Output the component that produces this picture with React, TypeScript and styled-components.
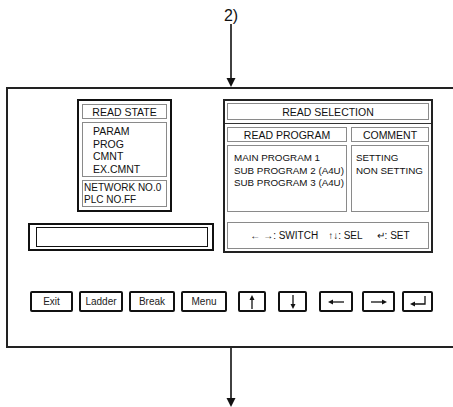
import React from "react";
import styled, { createGlobalStyle } from "styled-components";

const GlobalStyle = createGlobalStyle`
  html, body {
    margin: 0;
    padding: 0;
    background: #fff;
  }
  body {
    width: 453px;
    height: 407px;
    overflow: hidden;
    font-family: "Liberation Sans", Arial, sans-serif;
    color: #111;
  }
`;

const Page = styled.div`
  width: 453px;
  height: 407px;
  overflow: hidden;
  display: flex;
  flex-direction: column;
`;

const Connector = styled.div<{ $h: number }>`
  width: 462px;
  height: ${(p) => p.$h}px;
  flex-shrink: 0;
  display: flex;
  flex-direction: column;
  align-items: center;
`;

const StepLabel = styled.div`
  height: 24px;
  padding-top: 8px;
  box-sizing: border-box;
  font-size: 16px;
  line-height: 15px;
`;

const Panel = styled.div`
  flex-shrink: 0;
  margin-left: 6px;
  width: 480px;
  height: 261px;
  box-sizing: border-box;
  border: 2px solid #222;
  padding: 10px 0 0 20px;
  display: flex;
  flex-direction: column;
`;

const TopSection = styled.div`
  display: flex;
  gap: 9px;
`;

const LeftColumn = styled.div`
  width: 186px;
  display: flex;
  flex-direction: column;
  gap: 11px;
`;

const StateBox = styled.div`
  margin-left: 49px;
  width: 95px;
  height: 113px;
  box-sizing: border-box;
  border: 2px solid #111;
  padding: 3px;
  display: flex;
  flex-direction: column;
  gap: 3px;
`;

const GrayBox = styled.div<{ $h?: number }>`
  border: 1px solid #8a8a8a;
  box-sizing: border-box;
  height: ${(p) => (p.$h ? `${p.$h}px` : "auto")};
  font-size: 10.5px;
`;

const TitleBox = styled(GrayBox)`
  display: flex;
  align-items: center;
  justify-content: center;
  white-space: nowrap;
`;

const ListBox = styled(GrayBox)`
  padding: 2px 0 0 10px;
  line-height: 12.5px;
`;

const InfoBox = styled(GrayBox)`
  padding: 1px 0 0 1px;
  line-height: 12px;
  font-size: 10px;
  white-space: nowrap;
`;

const InputFrame = styled.div`
  width: 186px;
  height: 28px;
  box-sizing: border-box;
  border: 2px solid #111;
  padding: 2px 4px 2px 6px;
`;

const InputField = styled.div`
  height: 100%;
  box-sizing: border-box;
  border: 1px solid #111;
`;

const SelectBox = styled.div`
  width: 210px;
  height: 154px;
  box-sizing: border-box;
  border: 2px solid #222;
  display: flex;
  flex-direction: column;
`;

const SelectHead = styled.div`
  padding: 2px 2px 3px;
  border-bottom: 1px solid #333;
`;

const SelectBody = styled.div`
  padding: 3px 2px 2px;
  display: flex;
  flex-direction: column;
`;

const Columns = styled.div`
  display: grid;
  grid-template-columns: 120px 78px;
  column-gap: 4px;
  row-gap: 3px;
`;

const ContentBox = styled(GrayBox)<{ $pl: number }>`
  padding: 6px 0 0 ${(p) => p.$pl}px;
  font-size: 9.8px;
  line-height: 12.5px;
  white-space: nowrap;
  overflow: hidden;
`;

const HelpBox = styled(GrayBox)`
  margin-top: 10px;
  padding-left: 4px;
  display: flex;
  align-items: center;
  justify-content: center;
  font-size: 10px;
  white-space: nowrap;
`;

const HelpItem = styled.span<{ $ml?: number }>`
  margin-left: ${(p) => p.$ml ?? 0}px;
`;

const KeyRow = styled.div`
  margin-top: 38px;
  padding-left: 2px;
  display: flex;
  align-items: center;
`;

const Key = styled.div<{ $w: number; $ml?: number }>`
  width: ${(p) => p.$w}px;
  height: 21px;
  margin-left: ${(p) => p.$ml ?? 0}px;
  box-sizing: border-box;
  border: 2px solid #111;
  border-radius: 2px;
  display: flex;
  align-items: center;
  justify-content: center;
  font-size: 10px;
  color: #222;
`;

const VArrow = ({ h }: { h: number }) => (
  <svg width="12" height={h} style={{ display: "block" }}>
    <line x1="6" y1="0" x2="6" y2={h - 8} stroke="#111" strokeWidth="1.6" />
    <polygon points={`1.5,${h - 9} 10.5,${h - 9} 6,${h}`} fill="#111" />
  </svg>
);

const UpIcon = () => (
  <svg width="8" height="14">
    <line x1="4" y1="4" x2="4" y2="14" stroke="#111" strokeWidth="1.3" />
    <polygon points="4,0 1.5,5 6.5,5" fill="#111" />
  </svg>
);

const DownIcon = () => (
  <svg width="8" height="14">
    <line x1="4" y1="0" x2="4" y2="10" stroke="#111" strokeWidth="1.3" />
    <polygon points="4,14 1.5,9 6.5,9" fill="#111" />
  </svg>
);

const LeftIcon = () => (
  <svg width="16" height="8">
    <line x1="4" y1="4" x2="16" y2="4" stroke="#111" strokeWidth="1.3" />
    <polygon points="0,4 5,1.5 5,6.5" fill="#111" />
  </svg>
);

const RightIcon = () => (
  <svg width="16" height="8">
    <line x1="0" y1="4" x2="12" y2="4" stroke="#111" strokeWidth="1.3" />
    <polygon points="16,4 11,1.5 11,6.5" fill="#111" />
  </svg>
);

const EnterIcon = () => (
  <svg width="16" height="11">
    <polyline points="15,0 15,8 4,8" fill="none" stroke="#111" strokeWidth="1.3" />
    <polygon points="0,8 5,5.5 5,10.5" fill="#111" />
  </svg>
);

export default function App() {
  return (
    <Page>
      <GlobalStyle />
      <Connector $h={87}>
        <StepLabel>2)</StepLabel>
        <VArrow h={63} />
      </Connector>
      <Panel>
        <TopSection>
          <LeftColumn>
            <StateBox>
              <TitleBox $h={15}>READ STATE</TitleBox>
              <ListBox $h={55}>
                <div>PARAM</div>
                <div>PROG</div>
                <div>CMNT</div>
                <div>EX.CMNT</div>
              </ListBox>
              <InfoBox $h={27}>
                <div>NETWORK NO.0</div>
                <div>PLC NO.FF</div>
              </InfoBox>
            </StateBox>
            <InputFrame>
              <InputField />
            </InputFrame>
          </LeftColumn>
          <SelectBox>
            <SelectHead>
              <TitleBox $h={17}>READ SELECTION</TitleBox>
            </SelectHead>
            <SelectBody>
              <Columns>
                <TitleBox $h={15}>READ PROGRAM</TitleBox>
                <TitleBox $h={15}>COMMENT</TitleBox>
                <ContentBox $h={67} $pl={6}>
                  <div>MAIN PROGRAM 1</div>
                  <div>SUB PROGRAM 2 (A4U)</div>
                  <div>SUB PROGRAM 3 (A4U)</div>
                </ContentBox>
                <ContentBox $h={67} $pl={4}>
                  <div>SETTING</div>
                  <div>NON SETTING</div>
                </ContentBox>
              </Columns>
              <HelpBox $h={27}>
                <HelpItem>←&nbsp;→: SWITCH</HelpItem>
                <HelpItem $ml={10}>↑↓: SEL</HelpItem>
                <HelpItem $ml={14}>↵: SET</HelpItem>
              </HelpBox>
            </SelectBody>
          </SelectBox>
        </TopSection>
        <KeyRow>
          <Key $w={43}>Exit</Key>
          <Key $w={44} $ml={6}>Ladder</Key>
          <Key $w={46} $ml={6}>Break</Key>
          <Key $w={46} $ml={6}>Menu</Key>
          <Key $w={28} $ml={11}><UpIcon /></Key>
          <Key $w={29} $ml={12}><DownIcon /></Key>
          <Key $w={34} $ml={12}><LeftIcon /></Key>
          <Key $w={33} $ml={9}><RightIcon /></Key>
          <Key $w={31} $ml={7}><EnterIcon /></Key>
        </KeyRow>
      </Panel>
      <Connector $h={59}>
        <VArrow h={59} />
      </Connector>
    </Page>
  );
}
